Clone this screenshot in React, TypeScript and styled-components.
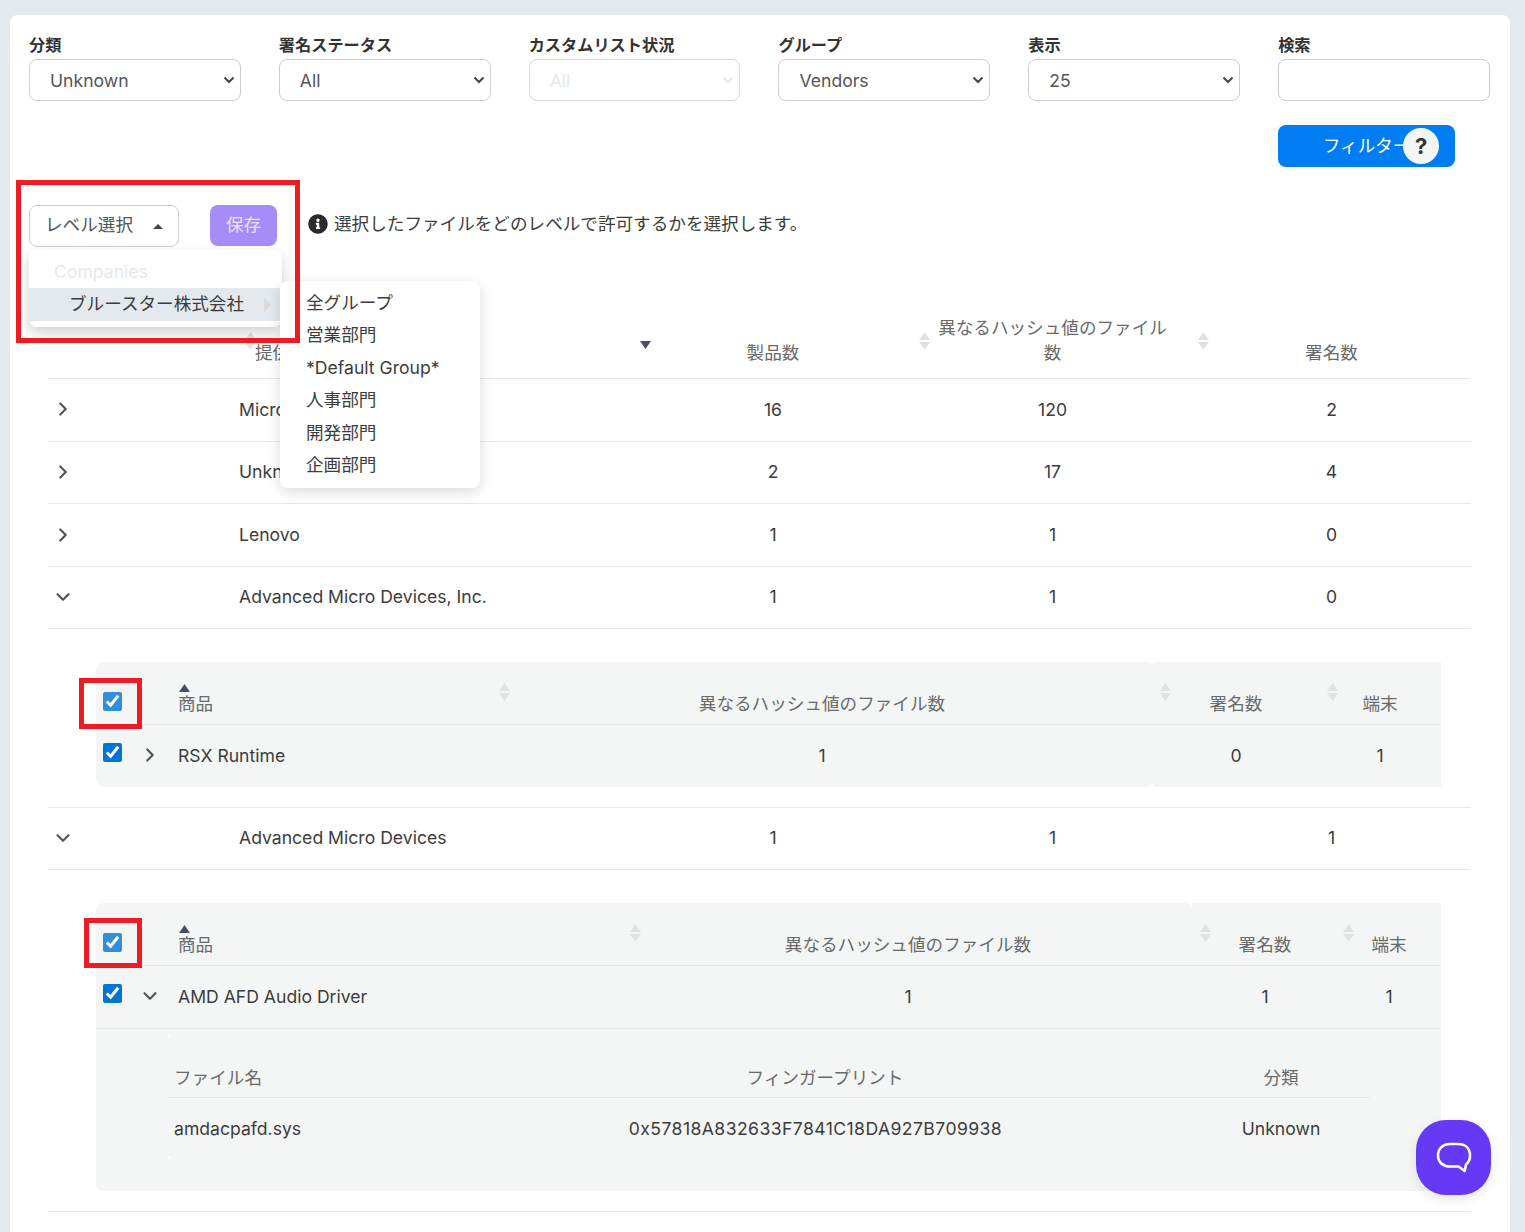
import React from 'react';
import styled, { createGlobalStyle } from 'styled-components';
import { ChevronDown, ChevronRight } from 'lucide-react';
import { FaInfoCircle } from 'react-icons/fa';

const FONT = 'Inter, "Noto Sans CJK JP", sans-serif';
const TEXT = '#3c3c3c';
const MUTED = '#6a6a6a';
const LINE = '#e3e9ec';

const chevronSvg = (color: string) =>
    `url("data:image/svg+xml,%3Csvg xmlns='http://www.w3.org/2000/svg' width='12' height='8' viewBox='0 0 12 8'%3E%3Cpath d='M1.500 1.500 6 6l4.500-4.500' fill='none' stroke='${color}' stroke-width='2'/%3E%3C/svg%3E")`;

interface IVendor {
    name: string;
    products: number;
    hashes: number;
    signatures: number;
    open?: boolean;
}

const VENDORS_TOP: IVendor[] = [
    { name: 'Microsoft Corporation', products: 16, hashes: 120, signatures: 2 },
    { name: 'Unknown', products: 2, hashes: 17, signatures: 4 },
    { name: 'Lenovo', products: 1, hashes: 1, signatures: 0 },
    { name: 'Advanced Micro Devices, Inc.', products: 1, hashes: 1, signatures: 0, open: true },
];

const GROUPS = ['全グループ', '営業部門', '*Default Group*', '人事部門', '開発部門', '企画部門'];

const FILTERS = [
    { label: '分類', value: 'Unknown' },
    { label: '署名ステータス', value: 'All' },
    { label: 'カスタムリスト状況', value: 'All', disabled: true },
    { label: 'グループ', value: 'Vendors' },
    { label: '表示', value: '25' },
];

const SortArrows = () => (
    <svg width="11" height="18" viewBox="0 0 11 18">
        <path d="M5.500 0 L11 8 H0 Z M0 10 H11 L5.500 18 Z" fill="#e0e2e3" />
    </svg>
);

const SortUp = () => (
    <svg width="11" height="8" viewBox="0 0 11 8">
        <path d="M5.500 0 L11 8 H0 Z" fill="#4b4f66" />
    </svg>
);

const SortDown = () => (
    <svg width="11" height="8" viewBox="0 0 11 8">
        <path d="M0 0 H11 L5.500 8 Z" fill="#4b4f66" />
    </svg>
);

const VendorRow = ({ vendor }: { vendor: IVendor }) => (
    <MainRow $open={vendor.open}>
        <ChevronCell>
            {vendor.open ? <ChevronDown size={22} strokeWidth={2.4} /> : <ChevronRight size={22} strokeWidth={2.4} />}
        </ChevronCell>
        <span>{vendor.name}</span>
        <CenterCell>{vendor.products}</CenterCell>
        <CenterCell>{vendor.hashes}</CenterCell>
        <CenterCell>{vendor.signatures}</CenterCell>
    </MainRow>
);

const App = (): JSX.Element => {
    return (
        <Page>
            <GlobalStyle />
            <Card>
                <FilterGrid>
                    {FILTERS.map((filter) => (
                        <Field key={filter.label}>
                            <FieldLabel>{filter.label}</FieldLabel>
                            <Select disabled={filter.disabled} defaultValue={filter.value}>
                                <option>{filter.value}</option>
                            </Select>
                        </Field>
                    ))}
                    <Field>
                        <FieldLabel>検索</FieldLabel>
                        <SearchInput />
                    </Field>
                    <FilterButton>
                        フィルター
                        <HelpBadge>?</HelpBadge>
                    </FilterButton>
                </FilterGrid>

                <LevelRow>
                    <LevelSelect>
                        レベル選択
                        <LevelCaret />
                    </LevelSelect>
                    <SaveButton>保存</SaveButton>
                    <InfoText>
                        <FaInfoCircle size={20} color="#2b2b2b" />
                        <InfoLabel>選択したファイルをどのレベルで許可するかを選択します。</InfoLabel>
                    </InfoText>

                    <CompanyMenu>
                        <MenuHeading>Companies</MenuHeading>
                        <MenuActive>
                            ブルースター株式会社
                            <MenuArrow />
                        </MenuActive>
                    </CompanyMenu>
                    <GroupMenu>
                        {GROUPS.map((group) => (
                            <GroupItem key={group}>{group}</GroupItem>
                        ))}
                    </GroupMenu>
                    <RedFrame $left={-13} $top={-25} $width={284} $height={163} />
                </LevelRow>

                <MainHeader>
                    <span />
                    <ProviderHead>
                        <SortSlot $left={6} $top={17}><SortArrows /></SortSlot>
                        提供元
                    </ProviderHead>
                    <HeadCell>
                        <SortSlot $left={7} $top={26}><SortDown /></SortSlot>
                        製品数
                    </HeadCell>
                    <HeadCell>
                        <SortSlot $left={6} $top={17}><SortArrows /></SortSlot>
                        異なるハッシュ値のファイル数
                    </HeadCell>
                    <HeadCell>
                        <SortSlot $left={6} $top={17}><SortArrows /></SortSlot>
                        署名数
                    </HeadCell>
                </MainHeader>

                {VENDORS_TOP.map((vendor) => (
                    <VendorRow key={vendor.name} vendor={vendor} />
                ))}

                <NestedWrap>
                    <NestedBox>
                        <Notch $left={1052} $top={0} $at="0 100%" />
                        <Notch $left={1052} $top={120} $at="0 0" />
                        <NestedHeader $cols="46px 36px 320px 648px 180px 108px 7px">
                            <CheckCell>
                                <HeaderCheck type="checkbox" defaultChecked />
                                <RedFrame $left={-17} $top={16} $width={63} $height={51} />
                            </CheckCell>
                            <span />
                            <NameHead>
                                <SortSlot $left={1} $top={22}><SortUp /></SortSlot>
                                商品
                            </NameHead>
                            <NestedHead>
                                <SortSlot $left={1} $top={21}><SortArrows /></SortSlot>
                                異なるハッシュ値のファイル数
                            </NestedHead>
                            <NestedHead>
                                <SortSlot $left={14} $top={21}><SortArrows /></SortSlot>
                                署名数
                            </NestedHead>
                            <NestedHead>
                                <SortSlot $left={1} $top={21}><SortArrows /></SortSlot>
                                端末
                            </NestedHead>
                        </NestedHeader>
                        <ProductRow $cols="46px 36px 320px 648px 180px 108px 7px">
                            <RowCheckCell><RowCheck type="checkbox" defaultChecked /></RowCheckCell>
                            <ExpandCell><ChevronRight size={22} strokeWidth={2.4} /></ExpandCell>
                            <span>RSX Runtime</span>
                            <CenterCell>1</CenterCell>
                            <CenterCell>0</CenterCell>
                            <CenterCell>1</CenterCell>
                        </ProductRow>
                    </NestedBox>
                </NestedWrap>

                <VendorRow vendor={{ name: 'Advanced Micro Devices', products: 1, hashes: 1, signatures: 1, open: true }} />

                <NestedWrap>
                    <NestedBox>
                        <Notch $left={1091} $top={0} $at="0 100%" />
                        <Notch $left={72} $top={132} $at="100% 100%" />
                        <Notch $left={72} $top={251} $at="100% 0" />
                        <NestedHeader $cols="46px 36px 451px 558px 156px 92px 6px">
                            <CheckCell>
                                <HeaderCheck type="checkbox" defaultChecked />
                                <RedFrame $left={-12} $top={15} $width={58} $height={50} />
                            </CheckCell>
                            <span />
                            <NameHead>
                                <SortSlot $left={1} $top={22}><SortUp /></SortSlot>
                                商品
                            </NameHead>
                            <NestedHead>
                                <SortSlot $left={1} $top={21}><SortArrows /></SortSlot>
                                異なるハッシュ値のファイル数
                            </NestedHead>
                            <NestedHead>
                                <SortSlot $left={13} $top={21}><SortArrows /></SortSlot>
                                署名数
                            </NestedHead>
                            <NestedHead>
                                <SortSlot $left={0} $top={21}><SortArrows /></SortSlot>
                                端末
                            </NestedHead>
                        </NestedHeader>
                        <ProductRow $cols="46px 36px 451px 558px 156px 92px 6px" $divided>
                            <RowCheckCell><RowCheck type="checkbox" defaultChecked /></RowCheckCell>
                            <ExpandCell><ChevronDown size={22} strokeWidth={2.4} /></ExpandCell>
                            <span>AMD AFD Audio Driver</span>
                            <CenterCell>1</CenterCell>
                            <CenterCell>1</CenterCell>
                            <CenterCell>1</CenterCell>
                        </ProductRow>
                        <FileSection>
                            <FileHeader $cols="290px 734px 178px">
                                <FileName>ファイル名</FileName>
                                <CenterCell>フィンガープリント</CenterCell>
                                <CenterCell>分類</CenterCell>
                            </FileHeader>
                            <FileRow $cols="271px 753px 178px">
                                <FileName>amdacpafd.sys</FileName>
                                <Fingerprint>0x57818A832633F7841C18DA927B709938</Fingerprint>
                                <CenterCell>Unknown</CenterCell>
                            </FileRow>
                        </FileSection>
                    </NestedBox>
                </NestedWrap>
            </Card>

            <ChatButton>
                <svg width="36" height="34" viewBox="0 0 36 34" fill="none">
                    <path
                        d="M14 3h8c7.500 0 12 4.500 12 11.500 0 4-1.500 7-4 9l-1.300 6.500-6.200-4.500H14C7 25.500 2 21 2 14.500 2 7.500 7 3 14 3z"
                        stroke="#fff"
                        strokeWidth="2.600"
                        strokeLinejoin="round"
                    />
                </svg>
            </ChatButton>
        </Page>
    );
};

const GlobalStyle = createGlobalStyle`
    html, body {
        margin: 0;
        height: 1232px;
        overflow: hidden;
    }
    body {
        background: #e3e9ec;
        font-family: ${FONT};
        font-size: 17.6px;
        color: ${TEXT};
    }
    * {
        box-sizing: border-box;
    }
`;

const Page = styled.div`
    padding: 15px 15px 0 10px;
`;

const Card = styled.div`
    background: #fff;
    border-radius: 8px;
    padding: 20px 20px 60px 19px;
`;

const FilterGrid = styled.div`
    display: grid;
    grid-template-columns: repeat(6, 1fr);
    column-gap: 38px;
    row-gap: 24px;
`;

const Field = styled.label`
    display: flex;
    flex-direction: column;
    gap: 3px;
`;

const FieldLabel = styled.span`
    font-size: 16.2px;
    font-weight: 700;
    line-height: 21px;
    color: #333;
`;

const Select = styled.select`
    height: 42px;
    padding: 0 20px;
    font: inherit;
    color: #555;
    appearance: none;
    background: #fff ${chevronSvg('%23444')} no-repeat right 5px center;
    border: 1px solid #ccc;
    border-radius: 8px;

    &:disabled {
        color: #e3e9ec;
        background-image: ${chevronSvg('%23e3e9ec')};
        border-color: #d8d8d8;
        opacity: 1;
    }
`;

const SearchInput = styled.input`
    height: 42px;
    border: 1px solid #ccc;
    border-radius: 8px;
    background: #fff;
`;

const FilterButton = styled.div`
    grid-column: 6;
    position: relative;
    width: 177px;
    height: 42px;
    padding-bottom: 4px;
    display: flex;
    align-items: center;
    justify-content: center;
    color: #fff;
    background: #007df2;
    border-radius: 8px;
`;

const HelpBadge = styled.span`
    position: absolute;
    right: 16px;
    top: 3px;
    width: 36px;
    height: 36px;
    display: flex;
    align-items: center;
    justify-content: center;
    border-radius: 50%;
    background: #f4f6f6;
    color: #333;
    font-size: 22px;
    font-weight: 700;
`;

const LevelRow = styled.div`
    position: relative;
    display: flex;
    align-items: center;
    height: 42px;
    margin-top: 38px;
`;

const LevelSelect = styled.div`
    width: 150px;
    height: 42px;
    padding: 0 0 5px 15px;
    display: flex;
    align-items: center;
    color: #555;
    border: 1px solid #ccc;
    border-radius: 8px;
`;

const LevelCaret = styled.span`
    margin: 5px 0 0 20px;
    border-left: 5px solid transparent;
    border-right: 5px solid transparent;
    border-bottom: 5px solid #444;
`;

const SaveButton = styled.div`
    width: 67px;
    height: 41px;
    margin-left: 31px;
    margin-bottom: 1px;
    padding-bottom: 5px;
    display: flex;
    align-items: center;
    justify-content: center;
    background: #a58cf7;
    color: #e8e1fd;
    border-radius: 8px;
`;

const InfoText = styled.div`
    display: flex;
    align-items: center;
    gap: 6px;
    margin-left: 31px;
    padding-bottom: 5px;
`;

const InfoLabel = styled.span`
    line-height: 21px;
`;

const CompanyMenu = styled.div`
    position: absolute;
    z-index: 2;
    left: 0;
    top: 45px;
    width: 253px;
    height: 77px;
    padding-top: 10px;
    background: #fff;
    border-radius: 8px;
    box-shadow: 0 6px 14px rgba(0, 0, 0, 0.18);
`;

const MenuHeading = styled.div`
    padding-left: 25px;
    line-height: 24px;
    color: #e3e9ec;
`;

const MenuActive = styled.div`
    display: flex;
    align-items: center;
    height: 33px;
    margin-top: 4px;
    padding: 0 0 5px 40px;
    background: #e3e9ec;
`;

const MenuArrow = styled.span`
    margin: 5px 0 0 20px;
    border-top: 7px solid transparent;
    border-bottom: 7px solid transparent;
    border-left: 7px solid #dcd8d4;
`;

const GroupMenu = styled.div`
    position: absolute;
    z-index: 3;
    left: 251px;
    top: 76px;
    width: 200px;
    height: 207px;
    padding: 5.5px 0 0 26px;
    background: #fff;
    border-radius: 8px;
    box-shadow: 0 4px 14px rgba(0, 0, 0, 0.14);
`;

const GroupItem = styled.div`
    height: 32.5px;
    line-height: 32.5px;
    white-space: nowrap;
`;

const RedFrame = styled.span<{ $left: number; $top: number; $width: number; $height: number }>`
    position: absolute;
    z-index: 4;
    left: ${(p) => p.$left}px;
    top: ${(p) => p.$top}px;
    width: ${(p) => p.$width}px;
    height: ${(p) => p.$height}px;
    border: 5px solid #ed1c24;
    pointer-events: none;
`;

const SortSlot = styled.span<{ $left: number; $top: number }>`
    position: absolute;
    left: ${(p) => p.$left}px;
    top: ${(p) => p.$top}px;
    display: flex;
`;

const MAIN_COLS = '191px 394px 280px 279px 279px';

const MainHeader = styled.div`
    display: grid;
    grid-template-columns: ${MAIN_COLS};
    height: 64px;
    margin: 68px 19px 0;
    border-bottom: 1px solid ${LINE};
    color: ${MUTED};
`;

const ProviderHead = styled.div`
    position: relative;
    align-self: stretch;
    display: flex;
    align-items: flex-end;
    padding: 0 0 14px 16px;
    line-height: 25px;
`;

const HeadCell = styled.div`
    position: relative;
    align-self: stretch;
    display: flex;
    align-items: flex-end;
    justify-content: center;
    padding: 0 24px 14px;
    line-height: 25px;
    text-align: center;
`;

const MainRow = styled.div<{ $open?: boolean }>`
    display: grid;
    grid-template-columns: ${MAIN_COLS};
    align-items: center;
    height: ${(p) => (p.$open ? '62px' : '62.67px')};
    margin: 0 19px;
    padding-bottom: 1px;
    border-bottom: 1px solid ${LINE};
`;

const ChevronCell = styled.div`
    display: flex;
    padding-left: 4px;
    color: #555;
`;

const CenterCell = styled.div`
    text-align: center;
`;

const Fingerprint = styled(CenterCell)`
    letter-spacing: 0.42px;
`;

const NestedWrap = styled.div`
    margin: 0 19px;
    padding: 33px 30px 20px 48px;
    border-bottom: 1px solid ${LINE};
`;

const NestedBox = styled.div`
    position: relative;
    background: #f4f6f6;
    border-radius: 8px 0 0 8px;
`;

const Notch = styled.span<{ $left: number; $top: number; $at: string }>`
    position: absolute;
    left: ${(p) => p.$left}px;
    top: ${(p) => p.$top}px;
    width: 5px;
    height: 5px;
    background: radial-gradient(circle at ${(p) => p.$at}, transparent 4.500px, #fff 5px);
`;

const NestedHeader = styled.div<{ $cols: string }>`
    display: grid;
    grid-template-columns: ${(p) => p.$cols};
    height: 63px;
    color: ${MUTED};
    background: linear-gradient(to right, transparent 46px, ${LINE} 46px) bottom / 100% 1px no-repeat;
`;

const CheckCell = styled.div`
    position: relative;
    padding: 30px 0 0 7px;
`;

const HeaderCheck = styled.input`
    display: block;
    width: 19px;
    height: 19px;
    margin: 0;
    accent-color: #0075d4;
    opacity: 0.8;
`;

const RowCheck = styled(HeaderCheck)`
    opacity: 1;
`;

const NameHead = styled.div`
    position: relative;
    align-self: stretch;
    display: flex;
    align-items: flex-end;
    padding-bottom: 9px;
    line-height: 24px;
`;

const NestedHead = styled(NameHead)`
    justify-content: center;
    white-space: nowrap;
`;

const ProductRow = styled.div<{ $cols: string; $divided?: boolean }>`
    display: grid;
    grid-template-columns: ${(p) => p.$cols};
    align-items: center;
    height: ${(p) => (p.$divided ? 63 : 62)}px;
    padding-bottom: 1px;
    border-bottom: ${(p) => (p.$divided ? `1px solid ${LINE}` : 'none')};
`;

const RowCheckCell = styled.div`
    padding: 0 0 6px 7px;
`;

const ExpandCell = styled.div`
    display: flex;
    margin-left: -3px;
    color: #555;
`;

const FileSection = styled.div`
    padding: 28px 71px 31px 72px;
`;

const FileHeader = styled.div<{ $cols: string }>`
    display: grid;
    grid-template-columns: ${(p) => p.$cols};
    align-items: center;
    height: 41px;
    padding-bottom: 1px;
    color: ${MUTED};
    border-bottom: 1px solid ${LINE};
`;

const FileRow = styled.div<{ $cols: string }>`
    display: grid;
    grid-template-columns: ${(p) => p.$cols};
    align-items: center;
    height: 62px;
`;

const FileName = styled.div`
    padding-left: 6px;
`;

const ChatButton = styled.div`
    position: fixed;
    left: 1416px;
    top: 1120px;
    width: 75px;
    height: 75px;
    display: flex;
    align-items: center;
    justify-content: center;
    background: #6639f7;
    border-radius: 30px;
    box-shadow: 0 4px 12px rgba(0, 0, 0, 0.1);
`;

export default App;
